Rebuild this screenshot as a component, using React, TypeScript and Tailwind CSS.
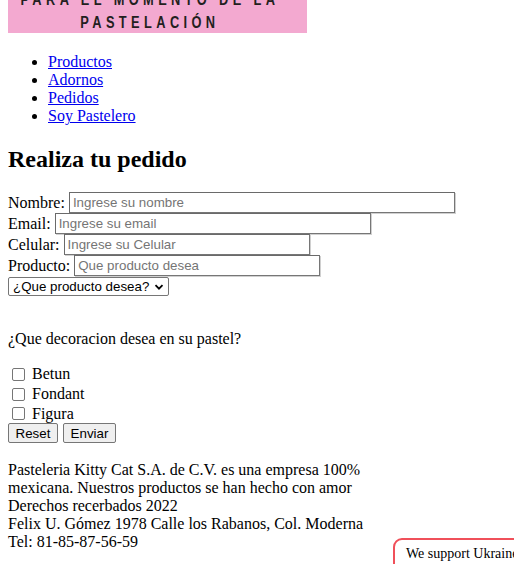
import React from "react";

const serif = "font-['Liberation_Serif',serif]";
const sans = "font-['Liberation_Sans',Arial,sans-serif]";

function Field({ label, width, placeholder }: { label: string; width: number; placeholder: string }) {
  return (
    <div className="flex items-center h-[21px]">
      <span className="mr-[4px]">{label}</span>
      <input
        type="text"
        placeholder={placeholder}
        style={{ width }}
        className={`h-[21px] border border-[#767676] border-t-[#6a6a6a] border-l-[#6a6a6a] shadow-[1px_1px_0_#d0d0d0] bg-white px-[3px] py-[2px] text-[13.33px] leading-[15px] text-black placeholder:text-[#757575] outline-none ${sans}`}
      />
    </div>
  );
}

function Check({ label, h }: { label: string; h: string }) {
  return (
    <div className={`flex items-center ${h}`}>
      <span className="ml-[4px] mr-[7px] inline-block w-[13px] h-[13px] rounded-[2px] border border-[#767676] bg-white" />
      <span>{label}</span>
    </div>
  );
}

export default function App() {
  return (
    <div className={`${serif} text-[16px] leading-[18px] text-black bg-white min-h-[564px] px-[8px] relative`}>
      <div className="h-[37px]">
        <div className="w-[299px] h-[33px] bg-[#f3a9d0] overflow-hidden">
          <div className={`mt-[-12px] mr-[20px] flex flex-col items-center leading-[23px] text-[16px] font-bold text-[#231f20] scale-x-[0.8] ${sans}`}>
            <span className="tracking-[5.5px] pl-[6px] whitespace-nowrap">PARA EL MOMENTO DE LA</span>
            <span className="tracking-[5.5px] pl-[6px] whitespace-nowrap">PASTELACIÓN</span>
          </div>
        </div>
      </div>

      <ul className="list-disc pl-[40px] my-[16px]">
        {["Productos", "Adornos", "Pedidos", "Soy Pastelero"].map((t) => (
          <li key={t} className="h-[18px]">
            <a href="#" className="text-[#0000ee] underline">{t}</a>
          </li>
        ))}
      </ul>

      <h2 className="text-[24px] font-bold leading-[28px] mt-[20px] mb-[19px]">Realiza tu pedido</h2>

      <div className="flex flex-col">
        <Field label="Nombre:" width={386} placeholder="Ingrese su nombre" />
        <Field label="Email:" width={316} placeholder="Ingrese su email" />
        <Field label="Celular:" width={246} placeholder="Ingrese su Celular" />
        <Field label="Producto:" width={246} placeholder="Que producto desea" />
        <div className="flex items-center h-[21px]">
          <div className={`flex items-center h-[19px] w-[161px] border border-[#767676] rounded-[2px] bg-white pl-[4px] pr-[4px] text-[13.33px] text-black ${sans}`}>
            <span className="flex-1">¿Que producto desea?</span>
            <svg width="10" height="10" viewBox="0 0 10 10">
              <path d="M1.5 3.2 L5 6.7 L8.5 3.2" stroke="#000" strokeWidth="1.8" fill="none" />
            </svg>
          </div>
        </div>
      </div>

      <p className="mt-[33px] mb-[16px] h-[18px]">¿Que decoracion desea en su pastel?</p>

      <div className="flex flex-col">
        <Check label="Betun" h="h-[20px]" />
        <Check label="Fondant" h="h-[20px]" />
        <Check label="Figura" h="h-[19px]" />
      </div>

      <div className={`flex gap-[5px] text-[13.33px] ${sans}`}>
        <button className="h-[20px] w-[50px] bg-[#efefef] border border-[#767676] rounded-[2px] text-black leading-[15px]">Reset</button>
        <button className="h-[20px] w-[53px] bg-[#efefef] border border-[#767676] rounded-[2px] text-black leading-[15px]">Enviar</button>
      </div>

      <p className="mt-[18px]">
        Pasteleria Kitty Cat S.A. de C.V. es una empresa 100%
        <br />
        mexicana. Nuestros productos se han hecho con amor
        <br />
        Derechos recerbados 2022
        <br />
        Felix U. Gómez 1978 Calle los Rabanos, Col. Moderna
        <br />
        Tel: 81-85-87-56-59
      </p>

      <div className="fixed left-[393px] top-[538px] w-[150px] h-[40px] bg-white border-2 border-[#f0505a] rounded-tl-[9px] pl-[11px] pt-[6px] text-[14px] leading-[16px] whitespace-nowrap overflow-hidden">
        We support Ukraine
      </div>
    </div>
  );
}
